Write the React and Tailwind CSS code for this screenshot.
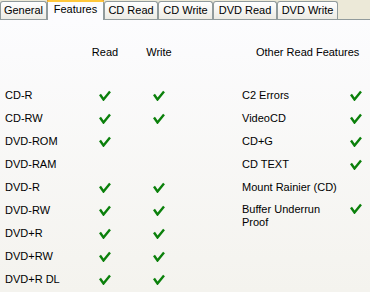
const tabs = [
  { name: "General", w: "w-[47px]" },
  { name: "Features", w: "w-[57px]", active: true },
  { name: "CD Read", w: "w-[54px]" },
  { name: "CD Write", w: "w-[55px]" },
  { name: "DVD Read", w: "w-[64px]" },
  { name: "DVD Write", w: "w-[61px]" },
];

const media = [
  ["CD-R", true, true],
  ["CD-RW", true, true],
  ["DVD-ROM", true, false],
  ["DVD-RAM", false, false],
  ["DVD-R", true, true],
  ["DVD-RW", true, true],
  ["DVD+R", true, true],
  ["DVD+RW", true, true],
  ["DVD+R DL", true, true],
];

const other = [
  ["C2 Errors", true],
  ["VideoCD", true],
  ["CD+G", true],
  ["CD TEXT", true],
  ["Mount Rainier (CD)", false],
];

function Check() {
  return (
    <svg width="12" height="11" viewBox="0 0 12 11" className="block">
      <path d="M1 4.5 L4.5 9.5 L11 1.5" fill="none" stroke="#0b800b" strokeWidth="2.4" strokeLinejoin="miter" />
    </svg>
  );
}

export default function App() {
  return (
    <div className="w-[370px] h-[292px] overflow-hidden bg-[#ece9d8] text-[11px] text-black" style={{ fontFamily: "'Liberation Sans', Arial, sans-serif" }}>
      <div className="flex items-end h-[20px] border-b border-[#919b9c]">
        {tabs.map((t) =>
          t.active ? (
            <div key={t.name} className={`${t.w} h-[21px] -mb-px relative z-10 bg-[#fcfcfe] border-x border-[#919b9c] flex justify-center pt-[3px]`}>
              <div className="absolute left-[-1px] right-[-1px] top-0 h-[3px] rounded-t-[3px] bg-[#ffc83c] border-t border-[#e68b2c]" />
              <span className="leading-[13px] mt-[1px]">{t.name}</span>
            </div>
          ) : (
            <div key={t.name} className={`${t.w} h-[18px] border border-b-0 border-[#919b9c] rounded-t-[3px] bg-gradient-to-b from-white to-[#ecebe4] flex items-center justify-center`}>
              <span className="leading-[13px]">{t.name}</span>
            </div>
          )
        )}
      </div>

      <div className="h-[272px] bg-gradient-to-b from-[#fcfcfe] to-[#f4f3ee] flex pt-[21px]">
        <div className="w-[237px] pl-[5px]">
          <div className="flex h-[23px] items-center">
            <div className="w-[80px]" />
            <div className="w-[40px] text-center">Read</div>
            <div className="w-[68px] text-center">Write</div>
          </div>
          <div className="h-[20px]" />
          {media.map(([label, r, w]) => (
            <div key={label} className="flex h-[23px] items-center">
              <div className="w-[80px]">{label}</div>
              <div className="w-[40px] flex justify-center">{r && <Check />}</div>
              <div className="w-[68px] flex justify-center">{w && <Check />}</div>
            </div>
          ))}
        </div>

        <div className="w-[133px]">
          <div className="flex h-[23px] items-center pl-[19px]">Other Read Features</div>
          <div className="h-[20px]" />
          {other.map(([label, c]) => (
            <div key={label} className="flex h-[23px] items-center pl-[5px]">
              <div className="w-[108px]">{label}</div>
              {c && <Check />}
            </div>
          ))}
          <div className="flex items-start pl-[5px] pt-[4px]">
            <div className="w-[108px] leading-[13px]">
              Buffer Underrun
              <br />
              Proof
            </div>
            <Check />
          </div>
        </div>
      </div>
    </div>
  );
}
